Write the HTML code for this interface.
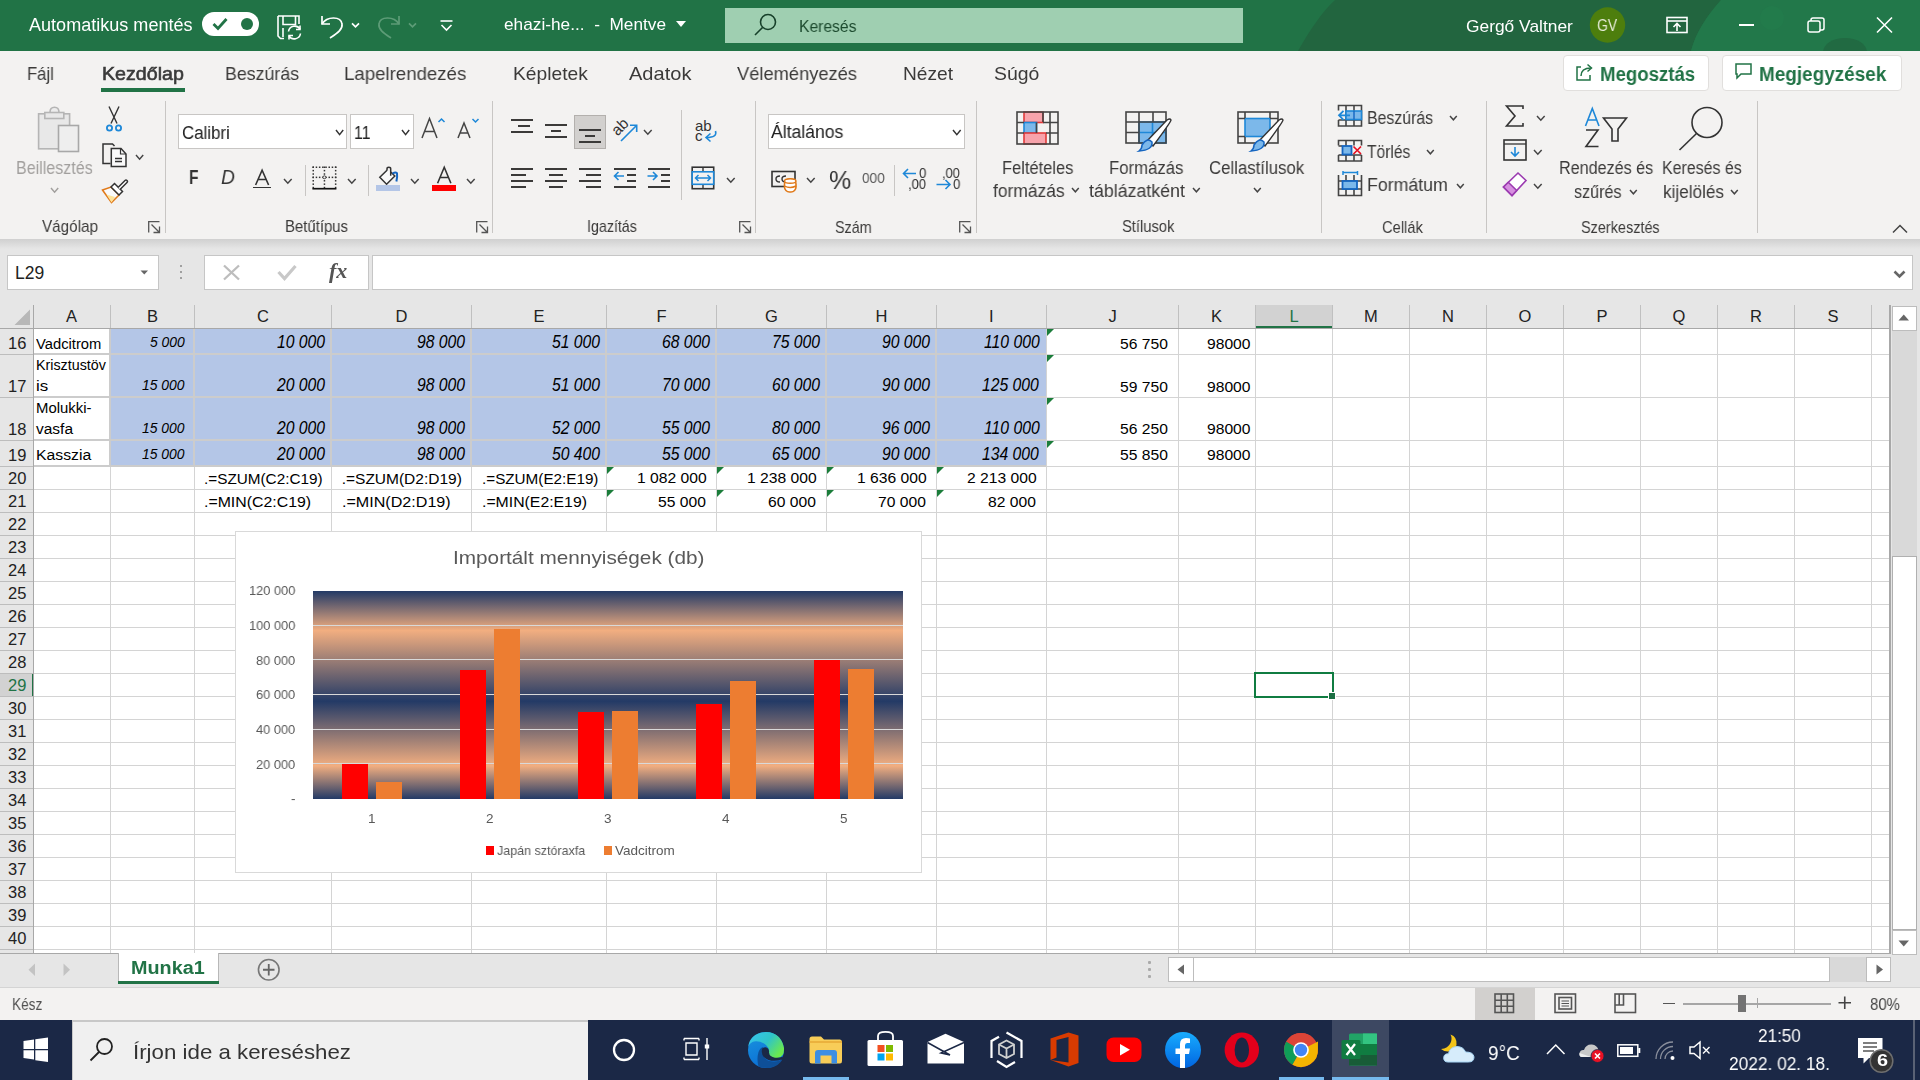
<!DOCTYPE html><html><head><meta charset="utf-8"><style>
*{margin:0;padding:0;box-sizing:border-box}
html,body{width:1920px;height:1080px;overflow:hidden;background:#e6e6e6;font-family:"Liberation Sans",sans-serif}
.t{position:absolute;white-space:pre;line-height:1.117;transform-origin:0 0;will-change:transform}
.l{will-change:auto}
svg{position:absolute;overflow:visible}
</style></head><body>
<div style="position:absolute;left:0px;top:0px;width:1920px;height:51px;background:#217346"></div>
<svg style="left:0;top:0" width="1920" height="51"><path d="M1335 0 H1721 C1705 18 1695 35 1691 51 H1298 C1310 30 1322 12 1335 0 Z" fill="#22653f"/>
<path d="M1721 0 H1920 V51 H1691 C1695 35 1705 18 1721 0 Z" fill="#22784a"/>
<circle cx="1772" cy="18" r="12" fill="#237d4c" opacity="0.6"/><ellipse cx="1845" cy="52" rx="22" ry="14" fill="#216a42"/></svg>
<div class="t" style="left:29.00px;top:15.01px;font-size:18px;color:#fff;transform:scaleX(1.0031);">Automatikus mentés</div>
<div style="position:absolute;left:202px;top:11.8px;width:57px;height:24px;background:#fff;border-radius:12px"></div>
<svg style="left:202px;top:11.8px" width="57" height="25"><path d="M11.5 12 l4.5 4.5 l8.5 -9.5" stroke="#217346" stroke-width="2.8" fill="none"/><circle cx="45" cy="12" r="6" fill="#217346"/></svg>
<svg style="left:276px;top:15px" width="26" height="25"><g stroke="#fff" stroke-width="1.6" fill="none">
<path d="M2 1 H23 V9"/><path d="M2 1 V21 L4.5 23.5 H8"/><path d="M7 1 V9.5 H19.5 V1"/><path d="M7 13 V22"/>
<path d="M12.5 16.5 a6.3 6.3 0 0 1 11.5 -2.5"/><path d="M24.5 18.5 a6.3 6.3 0 0 1 -11.5 2.5"/><path d="M24 10.5 V14.5 H20"/><path d="M13 24.5 V20.5 H17"/></g></svg>
<svg style="left:319px;top:12.8px" width="45" height="26"><g stroke="#fff" stroke-width="1.7" fill="none">
<path d="M3 3 V11 H11"/><path d="M3 11 C8 3 22 3 23 11 C24 17 17 21 11 25"/>
<path d="M33 10.3 l3.5 3.5 l3.5 -3.5"/></g></svg>
<svg style="left:377px;top:12.8px" width="45" height="26"><g stroke="#5d9c77" stroke-width="1.7" fill="none">
<path d="M22 3 V11 H14"/><path d="M22 11 C17 3 3 3 2 11 C1 17 8 21 14 25"/>
<path d="M32 10.3 l3.5 3.5 l3.5 -3.5"/></g></svg>
<svg style="left:440px;top:20px" width="13" height="11"><g stroke="#fff" stroke-width="1.6" fill="none"><path d="M0.5 1 H12.5"/><path d="M1.5 5 l5 5 l5 -5"/></g></svg>
<div class="t" style="left:504.30px;top:15.42px;font-size:17px;color:#fff;transform:scaleX(1.0150);">ehazi-he...  -  Mentve</div>
<svg style="left:676px;top:21px" width="11" height="7"><path d="M0 0 H10 L5 6 Z" fill="#fff"/></svg>
<div style="position:absolute;left:725px;top:8px;width:518px;height:35px;background:#9fcfb1"></div>
<svg style="left:753px;top:13px" width="24" height="24"><g stroke="#17402a" stroke-width="1.6" fill="none"><circle cx="15" cy="9" r="7.5"/><path d="M9.5 14.5 L2 22"/></g></svg>
<div class="t" style="left:799.30px;top:18.02px;font-size:16px;color:#1c4a2e;transform:scaleX(0.9780);">Keresés</div>
<div class="t" style="left:1466.00px;top:16.91px;font-size:17px;color:#fff;transform:scaleX(1.0219);">Gergő Valtner</div>
<svg style="left:1589px;top:7px" width="37" height="37"><circle cx="18.5" cy="18" r="17.7" fill="#4d7e0d"/></svg>
<div class="t" style="left:1597.00px;top:16.52px;font-size:16px;color:#e6ecd8;transform:scaleX(0.8696);">GV</div>
<svg style="left:1666px;top:16px" width="23" height="18"><g stroke="#fff" stroke-width="1.6" fill="none"><rect x="1" y="1.5" width="20" height="15"/><path d="M1 5 H21"/><path d="M11 15 V8 M7.5 11 L11 7.5 L14.5 11"/></g></svg>
<div style="position:absolute;left:1739px;top:24px;width:15px;height:1.6px;background:#fff"></div>
<svg style="left:1807px;top:17px" width="18" height="16"><g stroke="#fff" stroke-width="1.5" fill="none"><rect x="1" y="4" width="12" height="11" rx="2"/><path d="M4 4 V3 Q4 1 6 1 H15 Q17 1 17 3 V11 Q17 13 15 13 H13"/></g></svg>
<svg style="left:1876px;top:17px" width="17" height="16"><g stroke="#fff" stroke-width="1.6" fill="none"><path d="M1 0.5 L16 15.5 M16 0.5 L1 15.5"/></g></svg>
<div style="position:absolute;left:0px;top:51px;width:1920px;height:188px;background:#f3f2f1"></div>
<div style="position:absolute;left:681px;top:110px;width:1px;height:90px;background:#c8c6c4"></div>
<div class="t" style="left:26.90px;top:63.40px;font-size:19px;color:#3b3a39;transform:scaleX(0.8742);">Fájl</div>
<div class="t" style="left:101.90px;top:63.40px;font-size:19px;color:#3a3a3a;transform:scaleX(1.0329);-webkit-text-stroke:0.6px #3a3a3a;">Kezdőlap</div>
<div class="t" style="left:225.00px;top:63.40px;font-size:19px;color:#3b3a39;transform:scaleX(0.9342);">Beszúrás</div>
<div class="t" style="left:344.20px;top:63.40px;font-size:19px;color:#3b3a39;transform:scaleX(0.9808);">Lapelrendezés</div>
<div class="t" style="left:512.60px;top:63.40px;font-size:19px;color:#3b3a39;transform:scaleX(1.0122);">Képletek</div>
<div class="t" style="left:629.20px;top:63.40px;font-size:19px;color:#3b3a39;transform:scaleX(1.0550);">Adatok</div>
<div class="t" style="left:737.40px;top:63.40px;font-size:19px;color:#3b3a39;transform:scaleX(0.9632);">Véleményezés</div>
<div class="t" style="left:903.00px;top:63.40px;font-size:19px;color:#3b3a39;transform:scaleX(1.0080);">Nézet</div>
<div class="t" style="left:994.00px;top:63.40px;font-size:19px;color:#3b3a39;transform:scaleX(1.0227);">Súgó</div>
<div style="position:absolute;left:101px;top:88px;width:84px;height:4px;background:#217346"></div>
<div style="position:absolute;left:1563px;top:55px;width:146px;height:36px;background:#fff;border:1px solid #e1dfdd;border-radius:4px"></div>
<div style="position:absolute;left:1722px;top:55px;width:180px;height:36px;background:#fff;border:1px solid #e1dfdd;border-radius:4px"></div>
<svg style="left:1575px;top:62px" width="18" height="20"><g stroke="#217346" stroke-width="1.5" fill="none"><path d="M6 5 H2 V18 H15 V13"/><path d="M6 14 C6 8 10 6 16 6"/><path d="M12.5 2.5 L16.5 6 L12.5 9.5"/></g></svg>
<div class="t" style="left:1600.00px;top:62.90px;font-size:20px;color:#217346;font-weight:bold;transform:scaleX(0.9314);">Megosztás</div>
<svg style="left:1735px;top:63px" width="17" height="18"><g stroke="#217346" stroke-width="1.5" fill="none"><path d="M1 1 H16 V11 H6 L2 15 V11 H1 Z"/></g></svg>
<div class="t" style="left:1759.00px;top:62.90px;font-size:20px;color:#217346;font-weight:bold;transform:scaleX(0.9459);">Megjegyzések</div>
<div style="position:absolute;left:165px;top:101px;width:1px;height:132px;background:#c8c6c4"></div>
<div style="position:absolute;left:492px;top:101px;width:1px;height:132px;background:#c8c6c4"></div>
<div style="position:absolute;left:755px;top:101px;width:1px;height:132px;background:#c8c6c4"></div>
<div style="position:absolute;left:976px;top:101px;width:1px;height:132px;background:#c8c6c4"></div>
<div style="position:absolute;left:1321px;top:101px;width:1px;height:132px;background:#c8c6c4"></div>
<div style="position:absolute;left:1486px;top:101px;width:1px;height:132px;background:#c8c6c4"></div>
<div style="position:absolute;left:1757px;top:101px;width:1px;height:132px;background:#c8c6c4"></div>
<div class="t" style="left:42.40px;top:217.12px;font-size:17px;color:#3b3a39;transform:scaleX(0.8968);">Vágólap</div>
<div class="t" style="left:284.80px;top:217.22px;font-size:17px;color:#3b3a39;transform:scaleX(0.8778);">Betűtípus</div>
<div class="t" style="left:586.75px;top:217.12px;font-size:17px;color:#3b3a39;transform:scaleX(0.8375);">Igazítás</div>
<div class="t" style="left:834.70px;top:217.52px;font-size:17px;color:#3b3a39;transform:scaleX(0.8442);">Szám</div>
<div class="t" style="left:1121.70px;top:217.12px;font-size:17px;color:#3b3a39;transform:scaleX(0.8672);">Stílusok</div>
<div class="t" style="left:1382.10px;top:217.62px;font-size:17px;color:#3b3a39;transform:scaleX(0.8646);">Cellák</div>
<div class="t" style="left:1581.30px;top:217.62px;font-size:17px;color:#3b3a39;transform:scaleX(0.8495);">Szerkesztés</div>
<svg style="left:148px;top:221px" width="13" height="13"><g stroke="#555" stroke-width="1.3" fill="none"><path d="M0.7 11.5 V0.7 H11.5"/><path d="M3.5 3.5 L11.5 11.5 M11.5 5.5 V11.5 H5.5"/></g></svg>
<svg style="left:476px;top:221px" width="13" height="13"><g stroke="#555" stroke-width="1.3" fill="none"><path d="M0.7 11.5 V0.7 H11.5"/><path d="M3.5 3.5 L11.5 11.5 M11.5 5.5 V11.5 H5.5"/></g></svg>
<svg style="left:738.5px;top:221px" width="13" height="13"><g stroke="#555" stroke-width="1.3" fill="none"><path d="M0.7 11.5 V0.7 H11.5"/><path d="M3.5 3.5 L11.5 11.5 M11.5 5.5 V11.5 H5.5"/></g></svg>
<svg style="left:959px;top:221px" width="13" height="13"><g stroke="#555" stroke-width="1.3" fill="none"><path d="M0.7 11.5 V0.7 H11.5"/><path d="M3.5 3.5 L11.5 11.5 M11.5 5.5 V11.5 H5.5"/></g></svg>
<svg style="left:37px;top:106px" width="44" height="48"><g fill="none" stroke="#b5b5b5" stroke-width="1.6">
<rect x="1.6" y="7.8" width="31" height="35" fill="#e8e8e8"/><path d="M13 6.5 Q13 1.3 17.5 1.3 Q22 1.3 22 6.5" fill="#ececec"/><rect x="7.8" y="6.5" width="19" height="6" fill="#e8e8e8"/>
<rect x="21.5" y="19.5" width="20" height="26" fill="#eeeeee" stroke="#a8a8a8"/></g></svg>
<div class="t" style="left:16.00px;top:159.16px;font-size:17.5px;color:#a19f9d;transform:scaleX(0.9167);">Beillesztés</div>
<svg style="left:50.0px;top:187.39999999999998px" width="9.2" height="6.25"><path d="M1 1 L4.6 5.25 L8.2 1" stroke="#a19f9d" stroke-width="1.45" fill="none"/></svg>
<svg style="left:105px;top:106px" width="18" height="26"><g fill="none" stroke-width="1.4"><path d="M4 0.5 L12 17.5 M14 0.5 L6 17.5" stroke="#333"/><circle cx="4.5" cy="22" r="2.6" stroke="#1e88d8" stroke-width="1.8"/><circle cx="13.5" cy="22" r="2.6" stroke="#1e88d8" stroke-width="1.8"/></g></svg>
<svg style="left:101.5px;top:142.5px" width="26" height="26"><g fill="none" stroke="#333" stroke-width="1.5"><path d="M8.5 20.5 H1 V1 H10.5 L12.5 3"/><path d="M9.3 5.5 H19 L24 11 V23.5 H9.3 Z" fill="#fafafa"/><path d="M18.5 5.5 V11 H24" stroke-width="1.2"/><path d="M13 15.5 H20 M13 18.5 H20"/></g></svg>
<svg style="left:135.3px;top:153.7px" width="9.2" height="6.25"><path d="M1 1 L4.6 5.25 L8.2 1" stroke="#444" stroke-width="1.45" fill="none"/></svg>
<svg style="left:101px;top:178px" width="28" height="26"><g fill="none" stroke-width="1.5">
<path d="M1.5 12 L10 9 L18 17 L10.5 24.5 Z" fill="#fafafa" stroke="#e07a1a"/><path d="M5.5 16.5 L14 19 L10.5 24.5 Z" fill="#fde49a" stroke="none"/>
<path d="M10 9 L13.5 5.5 L21.5 13.5 L18 17 Z" fill="#fff" stroke="#333"/>
<path d="M17 9.5 L24 2.5 Q25 1.5 26 2.5 Q27 3.5 26 4.5 L19 11.5" fill="#fff" stroke="#333"/></g></svg>
<div style="position:absolute;left:178.4px;top:114.3px;width:169px;height:34.5px;background:#fff;border:1px solid #c8c6c4"></div>
<div class="t" style="left:181.70px;top:122.91px;font-size:18px;color:#222;transform:scaleX(0.9373);">Calibri</div>
<svg style="left:334.8px;top:128.7px" width="9.2" height="6.675"><path d="M1 1 L4.6 5.675 L8.2 1" stroke="#333" stroke-width="1.45" fill="none"/></svg>
<div style="position:absolute;left:350.3px;top:114.3px;width:63.5px;height:34.5px;background:#fff;border:1px solid #c8c6c4"></div>
<div class="t" style="left:354.00px;top:122.91px;font-size:18px;color:#222;transform:scaleX(0.8789);">11</div>
<svg style="left:400.8px;top:128.7px" width="9.2" height="6.675"><path d="M1 1 L4.6 5.675 L8.2 1" stroke="#333" stroke-width="1.45" fill="none"/></svg>
<svg style="left:421px;top:117px" width="25" height="22"><g fill="none" stroke-width="1.5"><path d="M1 21 L8.5 1.5 L16 21 M3.5 14.5 H13.5" stroke="#444"/><path d="M17.5 5 L20.5 2 L23.5 5" stroke="#1e88d8"/></g></svg>
<svg style="left:457px;top:117px" width="23" height="22"><g fill="none" stroke-width="1.5"><path d="M1 21 L7 6 L13 21 M3 16 H11" stroke="#444"/><path d="M15.5 2 L18.5 5 L21.5 2" stroke="#1e88d8"/></g></svg>
<div class="t" style="left:189.00px;top:166.25px;font-size:20.5px;color:#333;font-weight:bold;transform:scaleX(0.7615);">F</div>
<div class="t" style="left:221.00px;top:166.25px;font-size:20.5px;color:#333;font-style:italic;transform:scaleX(0.9400);">D</div>
<svg style="left:252px;top:168px" width="21" height="18"><path d="M3.6 17 L10.1 2.2 L16.6 17 M5.9 11.5 H14.3" stroke="#333" stroke-width="1.6" fill="none"/></svg>
<div style="position:absolute;left:253px;top:187px;width:18px;height:1.3px;background:#333"></div>
<svg style="left:283.3px;top:177.7px" width="9.65" height="6.25"><path d="M1 1 L4.825 5.25 L8.65 1" stroke="#444" stroke-width="1.45" fill="none"/></svg>
<div style="position:absolute;left:304.6px;top:164.5px;width:1px;height:31px;background:#c8c6c4"></div>
<svg style="left:312px;top:166px" width="26" height="25"><g fill="#333"><rect x="0.50" y="0.50" width="1.5" height="1.5"/><rect x="3.70" y="0.50" width="1.5" height="1.5"/><rect x="6.90" y="0.50" width="1.5" height="1.5"/><rect x="10.10" y="0.50" width="1.5" height="1.5"/><rect x="13.30" y="0.50" width="1.5" height="1.5"/><rect x="16.50" y="0.50" width="1.5" height="1.5"/><rect x="19.70" y="0.50" width="1.5" height="1.5"/><rect x="22.90" y="0.50" width="1.5" height="1.5"/><rect x="0.50" y="10.60" width="1.5" height="1.5"/><rect x="3.70" y="10.60" width="1.5" height="1.5"/><rect x="6.90" y="10.60" width="1.5" height="1.5"/><rect x="10.10" y="10.60" width="1.5" height="1.5"/><rect x="13.30" y="10.60" width="1.5" height="1.5"/><rect x="16.50" y="10.60" width="1.5" height="1.5"/><rect x="19.70" y="10.60" width="1.5" height="1.5"/><rect x="22.90" y="10.60" width="1.5" height="1.5"/><rect x="0.50" y="0.50" width="1.5" height="1.5"/><rect x="0.50" y="3.88" width="1.5" height="1.5"/><rect x="0.50" y="7.27" width="1.5" height="1.5"/><rect x="0.50" y="10.65" width="1.5" height="1.5"/><rect x="0.50" y="14.03" width="1.5" height="1.5"/><rect x="0.50" y="17.42" width="1.5" height="1.5"/><rect x="0.50" y="20.80" width="1.5" height="1.5"/><rect x="22.90" y="0.50" width="1.5" height="1.5"/><rect x="22.90" y="3.88" width="1.5" height="1.5"/><rect x="22.90" y="7.27" width="1.5" height="1.5"/><rect x="22.90" y="10.65" width="1.5" height="1.5"/><rect x="22.90" y="14.03" width="1.5" height="1.5"/><rect x="22.90" y="17.42" width="1.5" height="1.5"/><rect x="22.90" y="20.80" width="1.5" height="1.5"/><rect x="11.70" y="0.50" width="1.5" height="1.5"/><rect x="11.70" y="3.88" width="1.5" height="1.5"/><rect x="11.70" y="7.27" width="1.5" height="1.5"/><rect x="11.70" y="10.65" width="1.5" height="1.5"/><rect x="11.70" y="14.03" width="1.5" height="1.5"/><rect x="11.70" y="17.42" width="1.5" height="1.5"/><rect x="11.70" y="20.80" width="1.5" height="1.5"/></g><circle cx="12.4" cy="11.3" r="1.5" fill="#f3f2f1" stroke="#333" stroke-width="0.9"/><path d="M0.4 22.7 H24.4" stroke="#111" stroke-width="1.7"/></svg>
<svg style="left:346.8px;top:177.7px" width="9.65" height="6.25"><path d="M1 1 L4.825 5.25 L8.65 1" stroke="#444" stroke-width="1.45" fill="none"/></svg>
<div style="position:absolute;left:367.8px;top:164.5px;width:1px;height:31px;background:#c8c6c4"></div>
<svg style="left:378px;top:166px" width="24" height="20"><g fill="none" stroke-width="1.5"><path d="M9 4.2 L1.8 11.3 L8.6 18.2 L16.8 10 L12.7 6" fill="#fafafa" stroke="#333"/><path d="M9 4.5 V2.8 Q9 1.2 10.85 1.2 Q12.7 1.2 12.7 2.8 V9.8" stroke="#333"/><path d="M14.5 7.7 Q17.5 5.8 19 7.2 Q19.5 10 18.4 15.5" stroke="#1565c0" stroke-width="2"/></g></svg>
<div style="position:absolute;left:376px;top:185px;width:24px;height:6px;background:#b4c6e7"></div>
<svg style="left:409.8px;top:177.7px" width="9.65" height="6.25"><path d="M1 1 L4.825 5.25 L8.65 1" stroke="#444" stroke-width="1.45" fill="none"/></svg>
<svg style="left:436px;top:166px" width="17" height="18"><path d="M1.6 17.2 L8.25 1.3 L14.9 17.2 M4 11.5 H12.5" stroke="#333" stroke-width="1.6" fill="none"/></svg>
<div style="position:absolute;left:432px;top:185px;width:24px;height:6px;background:#ff0000"></div>
<svg style="left:465.8px;top:177.7px" width="9.65" height="6.25"><path d="M1 1 L4.825 5.25 L8.65 1" stroke="#444" stroke-width="1.45" fill="none"/></svg>
<div style="position:absolute;left:511px;top:119px;width:22px;height:2px;background:#3b3a39"></div>
<div style="position:absolute;left:517.5px;top:125px;width:12.0px;height:2px;background:#3b3a39"></div>
<div style="position:absolute;left:511px;top:131px;width:22px;height:2px;background:#3b3a39"></div>
<div style="position:absolute;left:545px;top:123.5px;width:21.600000000000023px;height:2px;background:#3b3a39"></div>
<div style="position:absolute;left:551px;top:129.5px;width:10px;height:2px;background:#3b3a39"></div>
<div style="position:absolute;left:545px;top:135.5px;width:21.600000000000023px;height:2px;background:#3b3a39"></div>
<div style="position:absolute;left:574px;top:115px;width:32px;height:34px;background:#d2d0ce;border:1px solid #b3b0ad"></div>
<div style="position:absolute;left:579.3px;top:129.3px;width:21.5px;height:2px;background:#3b3a39"></div>
<div style="position:absolute;left:585px;top:135.4px;width:10px;height:2px;background:#3b3a39"></div>
<div style="position:absolute;left:579.3px;top:141.3px;width:21.5px;height:2px;background:#3b3a39"></div>
<svg style="left:611px;top:117px" width="28" height="27"><g fill="none"><text x="0" y="0" font-family="Liberation Sans" font-size="15.5" fill="#333" transform="translate(6.5,19.5) rotate(-45)">ab</text><path d="M10 24 L25.5 8.5 M19 8.3 H25.7 V15" stroke="#1e88d8" stroke-width="1.6"/></g></svg>
<svg style="left:642.8px;top:128.7px" width="9.65" height="6.25"><path d="M1 1 L4.825 5.25 L8.65 1" stroke="#444" stroke-width="1.45" fill="none"/></svg>
<svg style="left:694px;top:117px" width="26" height="27"><text x="1" y="13.6" font-family="Liberation Sans" font-size="15" fill="#333">ab</text><text x="1" y="24.3" font-family="Liberation Sans" font-size="15" fill="#333">c</text><path d="M21.5 14 Q23.5 20.5 12.5 20.5 M16.5 16.5 L12 20.5 L16.5 24.5" stroke="#1e88d8" stroke-width="1.6" fill="none"/></svg>
<div style="position:absolute;left:511px;top:168.3px;width:22px;height:2px;background:#3b3a39"></div>
<div style="position:absolute;left:511px;top:174.3px;width:15.299999999999955px;height:2px;background:#3b3a39"></div>
<div style="position:absolute;left:511px;top:180.3px;width:22px;height:2px;background:#3b3a39"></div>
<div style="position:absolute;left:511px;top:186.3px;width:15.299999999999955px;height:2px;background:#3b3a39"></div>
<div style="position:absolute;left:545px;top:168.3px;width:21.600000000000023px;height:2px;background:#3b3a39"></div>
<div style="position:absolute;left:548.8px;top:174.3px;width:14.600000000000023px;height:2px;background:#3b3a39"></div>
<div style="position:absolute;left:545px;top:180.3px;width:21.600000000000023px;height:2px;background:#3b3a39"></div>
<div style="position:absolute;left:548.8px;top:186.3px;width:14.600000000000023px;height:2px;background:#3b3a39"></div>
<div style="position:absolute;left:579.3px;top:168.3px;width:21.5px;height:2px;background:#3b3a39"></div>
<div style="position:absolute;left:585.6px;top:174.3px;width:15.199999999999932px;height:2px;background:#3b3a39"></div>
<div style="position:absolute;left:579.3px;top:180.3px;width:21.5px;height:2px;background:#3b3a39"></div>
<div style="position:absolute;left:585.6px;top:186.3px;width:15.199999999999932px;height:2px;background:#3b3a39"></div>
<div style="position:absolute;left:614.2px;top:168.3px;width:21.59999999999991px;height:2px;background:#3b3a39"></div>
<div style="position:absolute;left:614.2px;top:186.3px;width:21.59999999999991px;height:2px;background:#3b3a39"></div>
<div style="position:absolute;left:627px;top:174.3px;width:8.799999999999955px;height:2px;background:#3b3a39"></div>
<div style="position:absolute;left:627px;top:180.3px;width:8.799999999999955px;height:2px;background:#3b3a39"></div>
<svg style="left:613px;top:170px" width="14" height="12"><path d="M1.5 6 H11 M5.5 2 L1.5 6 L5.5 10" stroke="#1e88d8" stroke-width="1.6" fill="none"/></svg>
<div style="position:absolute;left:648.2px;top:168.3px;width:21.799999999999955px;height:2px;background:#3b3a39"></div>
<div style="position:absolute;left:648.2px;top:186.3px;width:21.799999999999955px;height:2px;background:#3b3a39"></div>
<div style="position:absolute;left:661px;top:174.3px;width:9px;height:2px;background:#3b3a39"></div>
<div style="position:absolute;left:661px;top:180.3px;width:9px;height:2px;background:#3b3a39"></div>
<svg style="left:647px;top:170px" width="14" height="12"><path d="M0.5 6 H10 M6 2 L10 6 L6 10" stroke="#1e88d8" stroke-width="1.6" fill="none"/></svg>
<svg style="left:691px;top:166px" width="25" height="25"><g fill="none"><rect x="1.2" y="1.2" width="21.5" height="21.5" stroke="#333" stroke-width="1.6"/><path d="M12 1 V23" stroke="#333" stroke-width="1.4"/><rect x="1.2" y="5.8" width="21.5" height="12.5" fill="#f3f2f1" stroke="#1e88d8" stroke-width="1.6"/><path d="M4.5 12 H19.5 M7.5 9 L4.5 12 L7.5 15 M16.5 9 L19.5 12 L16.5 15" stroke="#1e88d8" stroke-width="1.5"/></g></svg>
<svg style="left:725.8px;top:177.2px" width="9.65" height="6.25"><path d="M1 1 L4.825 5.25 L8.65 1" stroke="#444" stroke-width="1.45" fill="none"/></svg>
<div style="position:absolute;left:768px;top:114.3px;width:197px;height:34.5px;background:#fff;border:1px solid #c8c6c4"></div>
<div class="t" style="left:771.20px;top:122.31px;font-size:18px;color:#222;transform:scaleX(0.9770);">Általános</div>
<svg style="left:951.8px;top:129.2px" width="9.65" height="6.675"><path d="M1 1 L4.825 5.675 L8.65 1" stroke="#333" stroke-width="1.45" fill="none"/></svg>
<svg style="left:771px;top:170px" width="27" height="23"><g fill="none"><rect x="1" y="1.5" width="23" height="15" stroke="#333" stroke-width="1.6"/><path d="M9 6 Q5 6 5 9 Q5 12 9 12 M15 6 Q11 6 11 9 Q11 12 15 12" stroke="#333" stroke-width="1.4"/><rect x="13.5" y="9" width="11.5" height="13" rx="5" fill="#fff" stroke="#e07a1a" stroke-width="1.6"/><ellipse cx="19.25" cy="11" rx="5.7" ry="2.3" fill="#fff" stroke="#e07a1a" stroke-width="1.5"/><path d="M13.5 16 Q19 19 25 16" stroke="#e07a1a" stroke-width="1.4"/></g></svg>
<svg style="left:805.8px;top:177.2px" width="9.65" height="6.25"><path d="M1 1 L4.825 5.25 L8.65 1" stroke="#444" stroke-width="1.45" fill="none"/></svg>
<div class="t" style="left:828.90px;top:165.87px;font-size:26px;color:#333;transform:scaleX(0.9609);">%</div>
<div class="t" style="left:862.30px;top:170.03px;font-size:15px;color:#555;transform:scaleX(0.9080);">000</div>
<div style="position:absolute;left:894px;top:164.5px;width:1px;height:31.5px;background:#c8c6c4"></div>
<svg style="left:902px;top:167px" width="25" height="23"><path d="M1.5 6.5 H14 M6 2 L1.5 6.5 L6 11" stroke="#1e88d8" stroke-width="1.6" fill="none"/></svg>
<div class="t" style="left:918.60px;top:164.88px;font-size:14.5px;color:#333;transform:scaleX(0.9125);">0</div>
<div class="t" style="left:908.00px;top:176.28px;font-size:14.5px;color:#333;transform:scaleX(0.9000);">,00</div>
<div class="t" style="left:942.30px;top:164.88px;font-size:14.5px;color:#333;transform:scaleX(0.8850);">,00</div>
<div class="t" style="left:952.70px;top:176.28px;font-size:14.5px;color:#333;transform:scaleX(0.9125);">0</div>
<svg style="left:936px;top:178px" width="25" height="13"><path d="M0.5 6.5 H14 M9.5 2 L14 6.5 L9.5 11" stroke="#1e88d8" stroke-width="1.6" fill="none"/></svg>
<svg style="left:1016px;top:111px" width="43" height="34"><g stroke-width="1.6">
<rect x="8" y="1" width="19" height="10.5" fill="#f7a3ab" stroke="#e03a3a"/><rect x="8" y="11.5" width="12.5" height="10.5" fill="#7cb8ea" stroke="#1e88d8"/><rect x="8" y="22" width="22" height="11" fill="#f7a3ab" stroke="#e03a3a"/>
<rect x="1" y="1" width="41" height="32" fill="none" stroke="#444"/><path d="M1 11.5 H8 M27 11.5 H42 M1 22 H8 M30 22 H42 M34 1 V33 M27 1 V11 M20.5 11.5 V22" stroke="#444" fill="none"/>
</g></svg>
<div class="t" style="left:1002.00px;top:157.51px;font-size:18px;color:#3b3a39;transform:scaleX(0.9154);">Feltételes</div>
<div class="t" style="left:992.70px;top:181.21px;font-size:18px;color:#3b3a39;transform:scaleX(0.9676);">formázás</div>
<svg style="left:1071.3px;top:187.2px" width="8.75" height="5.824999999999999"><path d="M1 1 L4.375 4.824999999999999 L7.75 1" stroke="#444" stroke-width="1.45" fill="none"/></svg>
<svg style="left:1125px;top:111px" width="48" height="42"><g stroke-width="1.6">
<rect x="14" y="11" width="27" height="21" fill="#7cb8ea" stroke="#1e88d8"/><path d="M27.5 11 V32 M14 21.5 H41" stroke="#1e88d8"/>
<rect x="1" y="1" width="40" height="31" fill="none" stroke="#444"/><path d="M1 11 H41 M1 21.5 H14 M14 1 V32 M28 1 V11" stroke="#444" fill="none"/>
<path d="M22 30 L42 9 Q45 7 46 9 Q46 11 28 35 Z" fill="#fff" stroke="#333" stroke-width="1.4"/>
<path d="M17 34 Q22 26 27 31 Q28 39 14 40 Q17 38 17 34 Z" fill="#7cb8ea" stroke="#1565c0" stroke-width="1.5"/>
</g></svg>
<div class="t" style="left:1109.00px;top:157.51px;font-size:18px;color:#3b3a39;transform:scaleX(0.9300);">Formázás</div>
<div class="t" style="left:1089.30px;top:181.21px;font-size:18px;color:#3b3a39;transform:scaleX(0.9887);">táblázatként</div>
<svg style="left:1191.8px;top:187.2px" width="8.75" height="5.824999999999999"><path d="M1 1 L4.375 4.824999999999999 L7.75 1" stroke="#444" stroke-width="1.45" fill="none"/></svg>
<svg style="left:1237px;top:111px" width="48" height="42"><g stroke-width="1.6">
<rect x="8" y="7.5" width="25" height="18" fill="#7cb8ea" stroke="#1e88d8"/>
<rect x="1" y="1" width="40" height="31" fill="none" stroke="#444"/><path d="M1 7.5 H8 M33 7.5 H41 M1 25.5 H8 M8 1 V7 M8 26 V32 M33 1 V7" stroke="#444" fill="none"/>
<path d="M22 30 L42 9 Q45 7 46 9 Q46 11 28 35 Z" fill="#fff" stroke="#333" stroke-width="1.4"/>
<path d="M17 34 Q22 26 27 31 Q28 39 14 40 Q17 38 17 34 Z" fill="#7cb8ea" stroke="#1565c0" stroke-width="1.5"/>
</g></svg>
<div class="t" style="left:1209.20px;top:157.51px;font-size:18px;color:#3b3a39;transform:scaleX(0.9330);">Cellastílusok</div>
<svg style="left:1252.8px;top:187.2px" width="8.75" height="5.824999999999999"><path d="M1 1 L4.375 4.824999999999999 L7.75 1" stroke="#444" stroke-width="1.45" fill="none"/></svg>
<svg style="left:1337px;top:104px" width="27" height="24"><g fill="none" stroke="#444" stroke-width="1.6">
<path d="M1.5 6.5 V1.5 H24.5 V22 H1.5 V16"/><path d="M9 1.5 V22 M17 1.5 V22 M1.5 16 H24.5"/></g>
<rect x="9" y="7" width="15.5" height="8.5" fill="#7cb8ea" stroke="#1e88d8" stroke-width="1.6"/><path d="M17 7 V15.5" stroke="#1565c0" stroke-width="1.4"/>
<path d="M2 11.3 H13 M6.5 6.8 L2 11.3 L6.5 15.8" stroke="#1e88d8" stroke-width="1.8" fill="none"/></svg>
<svg style="left:1337px;top:138.5px" width="27" height="24"><g fill="none" stroke="#444" stroke-width="1.6">
<path d="M1.5 6.5 V1.5 H24.5 V6.5 M1.5 16 V22 H24.5 V16"/><path d="M9 1.5 V22 M17 1.5 V6.5 M17 16 V22 M1.5 7 H5 M1.5 16 H24.5"/></g>
<rect x="5.5" y="7" width="9" height="8.5" fill="#7cb8ea" stroke="#1565c0" stroke-width="1.8"/>
<path d="M16.5 7.5 L24 15 M24 7.5 L16.5 15" stroke="#e81123" stroke-width="1.7"/></svg>
<svg style="left:1337px;top:171px" width="27" height="26"><g fill="none" stroke="#444" stroke-width="1.6">
<path d="M1.5 4 V24.5 H24.5 V4"/><path d="M9 4 V24.5 M17 4 V24.5 M1.5 10 H24.5 M1.5 18 H24.5"/></g>
<rect x="5.5" y="10" width="14.5" height="8" fill="#7cb8ea" stroke="#1565c0" stroke-width="1.8"/>
<path d="M6 1.5 H20.5 M6 0 V4 M20.5 0 V4" stroke="#1e88d8" stroke-width="1.5" fill="none"/></svg>
<div class="t" style="left:1366.90px;top:107.51px;font-size:18px;color:#3b3a39;transform:scaleX(0.8813);">Beszúrás</div>
<svg style="left:1449.3px;top:114.7px" width="8.75" height="5.824999999999999"><path d="M1 1 L4.375 4.824999999999999 L7.75 1" stroke="#444" stroke-width="1.45" fill="none"/></svg>
<div class="t" style="left:1366.90px;top:141.51px;font-size:18px;color:#3b3a39;transform:scaleX(0.8660);">Törlés</div>
<svg style="left:1426.3px;top:149.2px" width="8.75" height="5.824999999999999"><path d="M1 1 L4.375 4.824999999999999 L7.75 1" stroke="#444" stroke-width="1.45" fill="none"/></svg>
<div class="t" style="left:1366.90px;top:175.31px;font-size:18px;color:#3b3a39;transform:scaleX(0.9854);">Formátum</div>
<svg style="left:1455.8px;top:182.7px" width="8.75" height="5.824999999999999"><path d="M1 1 L4.375 4.824999999999999 L7.75 1" stroke="#444" stroke-width="1.45" fill="none"/></svg>
<svg style="left:1505px;top:105px" width="20" height="22"><path d="M18 4 V1 H1.5 L10 11 L1.5 21 H18 V18" stroke="#333" stroke-width="1.6" fill="none"/></svg>
<svg style="left:1536.3px;top:115.2px" width="9.65" height="6.25"><path d="M1 1 L4.825 5.25 L8.65 1" stroke="#444" stroke-width="1.45" fill="none"/></svg>
<svg style="left:1503px;top:139px" width="24" height="22"><g fill="none"><rect x="1" y="1" width="22" height="20" stroke="#333" stroke-width="1.6"/><path d="M1 5 H23" stroke="#333" stroke-width="1.3"/><path d="M12 8 V17 M8 13 L12 17 L16 13" stroke="#1e88d8" stroke-width="1.6"/></g></svg>
<svg style="left:1532.8px;top:149.2px" width="9.65" height="6.25"><path d="M1 1 L4.825 5.25 L8.65 1" stroke="#444" stroke-width="1.45" fill="none"/></svg>
<svg style="left:1502px;top:172px" width="26" height="26"><g stroke-width="1.6" stroke="#9b3ab0" stroke-linejoin="miter"><path d="M16 1 L24 8.5 L10 23.5 L1.5 15 Z" fill="#fff"/><path d="M1.5 15 L6.3 10.3 L14.7 18.5 L10 23.5 Z" fill="#d68fe0"/></g></svg>
<svg style="left:1532.8px;top:182.7px" width="9.65" height="6.25"><path d="M1 1 L4.825 5.25 L8.65 1" stroke="#444" stroke-width="1.45" fill="none"/></svg>
<svg style="left:1584px;top:107px" width="46" height="42"><g fill="none" stroke-width="1.6"><path d="M1.5 19 L8.3 1.5 L15 19 M3.8 13 H12.8" stroke="#1e88d8"/><path d="M2 23 H14 L2 39.5 H14.5" stroke="#333"/><path d="M19.5 11 H42.5 L34 22 V34 H28 V22 Z" stroke="#333"/></g></svg>
<div class="t" style="left:1558.60px;top:157.71px;font-size:18px;color:#3b3a39;transform:scaleX(0.8971);">Rendezés és</div>
<div class="t" style="left:1573.60px;top:181.71px;font-size:18px;color:#3b3a39;transform:scaleX(0.8962);">szűrés</div>
<svg style="left:1628.8px;top:188.7px" width="8.75" height="5.824999999999999"><path d="M1 1 L4.375 4.824999999999999 L7.75 1" stroke="#444" stroke-width="1.45" fill="none"/></svg>
<svg style="left:1678px;top:106px" width="40" height="46"><g fill="none" stroke="#333" stroke-width="1.6"><circle cx="29" cy="16.5" r="15"/><path d="M18.5 27.5 L1.5 44"/></g></svg>
<div class="t" style="left:1661.70px;top:157.71px;font-size:18px;color:#3b3a39;transform:scaleX(0.8856);">Keresés és</div>
<div class="t" style="left:1662.60px;top:181.71px;font-size:18px;color:#3b3a39;transform:scaleX(0.9531);">kijelölés</div>
<svg style="left:1730.3px;top:188.7px" width="8.75" height="5.824999999999999"><path d="M1 1 L4.375 4.824999999999999 L7.75 1" stroke="#444" stroke-width="1.45" fill="none"/></svg>
<svg style="left:1892px;top:224px" width="16" height="10"><path d="M1 8.5 L8 1.5 L15 8.5" stroke="#444" stroke-width="1.5" fill="none"/></svg>
<div style="position:absolute;left:0;top:239px;width:1920px;height:10px;background:linear-gradient(#d0d0d0,#e6e6e6)"></div>
<div style="position:absolute;left:7px;top:255px;width:152px;height:35px;background:#fff;border:1px solid #c6c6c6"></div>
<div class="t l" style="left:15.00px;top:263.11px;font-size:18px;color:#222;transform:scaleX(0.9733);">L29</div>
<svg style="left:140px;top:270px" width="9" height="5"><path d="M0.5 0.5 H8 L4.25 4.5 Z" fill="#666"/></svg>
<div style="position:absolute;left:179.5px;top:265px;width:2.2px;height:2.2px;background:#888;border-radius:1px"></div>
<div style="position:absolute;left:179.5px;top:271px;width:2.2px;height:2.2px;background:#888;border-radius:1px"></div>
<div style="position:absolute;left:179.5px;top:277px;width:2.2px;height:2.2px;background:#888;border-radius:1px"></div>
<div style="position:absolute;left:204px;top:255px;width:165px;height:35px;background:#fff;border:1px solid #c6c6c6"></div>
<svg style="left:222px;top:264px" width="19" height="17"><path d="M2 1.5 L17 15.5 M17 1.5 L2 15.5" stroke="#bdbdbd" stroke-width="2.3" fill="none"/></svg>
<svg style="left:277px;top:264px" width="20" height="17"><path d="M1.5 8 L7.5 14.5 L18.5 2" stroke="#c8c8c8" stroke-width="3.2" fill="none"/></svg>
<div class="t" style="left:329px;top:259px;font-family:'Liberation Serif',serif;font-style:italic;font-weight:bold;font-size:22px;color:#555;letter-spacing:0px">fx</div>
<div style="position:absolute;left:372px;top:255px;width:1541px;height:35px;background:#fff;border:1px solid #c6c6c6"></div>
<svg style="left:1893px;top:270px" width="13" height="9"><path d="M1.5 1.5 L6.5 6.5 L11.5 1.5" stroke="#666" stroke-width="2.6" fill="none"/></svg>
<div style="position:absolute;left:0px;top:305px;width:1890px;height:23px;background:#e6e6e6"></div>
<div style="position:absolute;left:0px;top:328px;width:33px;height:625px;background:#e6e6e6"></div>
<div style="position:absolute;left:34px;top:329px;width:1855px;height:624px;background:#fff"></div>
<div style="position:absolute;left:1256px;top:305px;width:76px;height:23px;background:#d2d2d2"></div>
<div style="position:absolute;left:1256px;top:326px;width:76px;height:2px;background:#217346"></div>
<div style="position:absolute;left:0px;top:674px;width:32px;height:22px;background:#d2d2d2"></div>
<div style="position:absolute;left:32px;top:673px;width:2px;height:24px;background:#217346"></div>
<svg style="left:14px;top:309px" width="17" height="17"><path d="M16 0.5 V16 H0.5 Z" fill="#b8b8b8"/></svg>
<div style="position:absolute;left:33px;top:305px;width:1px;height:23px;background:#c0c0c0"></div>
<div style="position:absolute;left:110px;top:305px;width:1px;height:23px;background:#c0c0c0"></div>
<div style="position:absolute;left:194px;top:305px;width:1px;height:23px;background:#c0c0c0"></div>
<div style="position:absolute;left:331px;top:305px;width:1px;height:23px;background:#c0c0c0"></div>
<div style="position:absolute;left:471px;top:305px;width:1px;height:23px;background:#c0c0c0"></div>
<div style="position:absolute;left:606px;top:305px;width:1px;height:23px;background:#c0c0c0"></div>
<div style="position:absolute;left:716px;top:305px;width:1px;height:23px;background:#c0c0c0"></div>
<div style="position:absolute;left:826px;top:305px;width:1px;height:23px;background:#c0c0c0"></div>
<div style="position:absolute;left:936px;top:305px;width:1px;height:23px;background:#c0c0c0"></div>
<div style="position:absolute;left:1046px;top:305px;width:1px;height:23px;background:#c0c0c0"></div>
<div style="position:absolute;left:1178px;top:305px;width:1px;height:23px;background:#c0c0c0"></div>
<div style="position:absolute;left:1255px;top:305px;width:1px;height:23px;background:#c0c0c0"></div>
<div style="position:absolute;left:1332px;top:305px;width:1px;height:23px;background:#c0c0c0"></div>
<div style="position:absolute;left:1409px;top:305px;width:1px;height:23px;background:#c0c0c0"></div>
<div style="position:absolute;left:1486px;top:305px;width:1px;height:23px;background:#c0c0c0"></div>
<div style="position:absolute;left:1563px;top:305px;width:1px;height:23px;background:#c0c0c0"></div>
<div style="position:absolute;left:1640px;top:305px;width:1px;height:23px;background:#c0c0c0"></div>
<div style="position:absolute;left:1717px;top:305px;width:1px;height:23px;background:#c0c0c0"></div>
<div style="position:absolute;left:1794px;top:305px;width:1px;height:23px;background:#c0c0c0"></div>
<div style="position:absolute;left:1871px;top:305px;width:1px;height:23px;background:#c0c0c0"></div>
<div style="position:absolute;left:0px;top:328px;width:1890px;height:1px;background:#a8a8a8"></div>
<div style="position:absolute;left:33px;top:305px;width:1px;height:648px;background:#a8a8a8"></div>
<div style="position:absolute;left:0px;top:354px;width:33px;height:1px;background:#bdbdbd"></div>
<div style="position:absolute;left:0px;top:397px;width:33px;height:1px;background:#bdbdbd"></div>
<div style="position:absolute;left:0px;top:440px;width:33px;height:1px;background:#bdbdbd"></div>
<div style="position:absolute;left:0px;top:466px;width:33px;height:1px;background:#bdbdbd"></div>
<div style="position:absolute;left:0px;top:489px;width:33px;height:1px;background:#bdbdbd"></div>
<div style="position:absolute;left:0px;top:512px;width:33px;height:1px;background:#bdbdbd"></div>
<div style="position:absolute;left:0px;top:535px;width:33px;height:1px;background:#bdbdbd"></div>
<div style="position:absolute;left:0px;top:558px;width:33px;height:1px;background:#bdbdbd"></div>
<div style="position:absolute;left:0px;top:581px;width:33px;height:1px;background:#bdbdbd"></div>
<div style="position:absolute;left:0px;top:604px;width:33px;height:1px;background:#bdbdbd"></div>
<div style="position:absolute;left:0px;top:627px;width:33px;height:1px;background:#bdbdbd"></div>
<div style="position:absolute;left:0px;top:650px;width:33px;height:1px;background:#bdbdbd"></div>
<div style="position:absolute;left:0px;top:673px;width:33px;height:1px;background:#bdbdbd"></div>
<div style="position:absolute;left:0px;top:696px;width:33px;height:1px;background:#bdbdbd"></div>
<div style="position:absolute;left:0px;top:719px;width:33px;height:1px;background:#bdbdbd"></div>
<div style="position:absolute;left:0px;top:742px;width:33px;height:1px;background:#bdbdbd"></div>
<div style="position:absolute;left:0px;top:765px;width:33px;height:1px;background:#bdbdbd"></div>
<div style="position:absolute;left:0px;top:788px;width:33px;height:1px;background:#bdbdbd"></div>
<div style="position:absolute;left:0px;top:811px;width:33px;height:1px;background:#bdbdbd"></div>
<div style="position:absolute;left:0px;top:834px;width:33px;height:1px;background:#bdbdbd"></div>
<div style="position:absolute;left:0px;top:857px;width:33px;height:1px;background:#bdbdbd"></div>
<div style="position:absolute;left:0px;top:880px;width:33px;height:1px;background:#bdbdbd"></div>
<div style="position:absolute;left:0px;top:903px;width:33px;height:1px;background:#bdbdbd"></div>
<div style="position:absolute;left:0px;top:926px;width:33px;height:1px;background:#bdbdbd"></div>
<div style="position:absolute;left:0px;top:949px;width:33px;height:1px;background:#bdbdbd"></div>
<div style="position:absolute;left:110px;top:329px;width:1px;height:624px;background:#d4d4d4"></div>
<div style="position:absolute;left:194px;top:329px;width:1px;height:624px;background:#d4d4d4"></div>
<div style="position:absolute;left:331px;top:329px;width:1px;height:624px;background:#d4d4d4"></div>
<div style="position:absolute;left:471px;top:329px;width:1px;height:624px;background:#d4d4d4"></div>
<div style="position:absolute;left:606px;top:329px;width:1px;height:624px;background:#d4d4d4"></div>
<div style="position:absolute;left:716px;top:329px;width:1px;height:624px;background:#d4d4d4"></div>
<div style="position:absolute;left:826px;top:329px;width:1px;height:624px;background:#d4d4d4"></div>
<div style="position:absolute;left:936px;top:329px;width:1px;height:624px;background:#d4d4d4"></div>
<div style="position:absolute;left:1046px;top:329px;width:1px;height:624px;background:#d4d4d4"></div>
<div style="position:absolute;left:1178px;top:329px;width:1px;height:624px;background:#d4d4d4"></div>
<div style="position:absolute;left:1255px;top:329px;width:1px;height:624px;background:#d4d4d4"></div>
<div style="position:absolute;left:1332px;top:329px;width:1px;height:624px;background:#d4d4d4"></div>
<div style="position:absolute;left:1409px;top:329px;width:1px;height:624px;background:#d4d4d4"></div>
<div style="position:absolute;left:1486px;top:329px;width:1px;height:624px;background:#d4d4d4"></div>
<div style="position:absolute;left:1563px;top:329px;width:1px;height:624px;background:#d4d4d4"></div>
<div style="position:absolute;left:1640px;top:329px;width:1px;height:624px;background:#d4d4d4"></div>
<div style="position:absolute;left:1717px;top:329px;width:1px;height:624px;background:#d4d4d4"></div>
<div style="position:absolute;left:1794px;top:329px;width:1px;height:624px;background:#d4d4d4"></div>
<div style="position:absolute;left:1871px;top:329px;width:1px;height:624px;background:#d4d4d4"></div>
<div style="position:absolute;left:34px;top:354px;width:1855px;height:1px;background:#d4d4d4"></div>
<div style="position:absolute;left:34px;top:397px;width:1855px;height:1px;background:#d4d4d4"></div>
<div style="position:absolute;left:34px;top:440px;width:1855px;height:1px;background:#d4d4d4"></div>
<div style="position:absolute;left:34px;top:466px;width:1855px;height:1px;background:#d4d4d4"></div>
<div style="position:absolute;left:34px;top:489px;width:1855px;height:1px;background:#d4d4d4"></div>
<div style="position:absolute;left:34px;top:512px;width:1855px;height:1px;background:#d4d4d4"></div>
<div style="position:absolute;left:34px;top:535px;width:1855px;height:1px;background:#d4d4d4"></div>
<div style="position:absolute;left:34px;top:558px;width:1855px;height:1px;background:#d4d4d4"></div>
<div style="position:absolute;left:34px;top:581px;width:1855px;height:1px;background:#d4d4d4"></div>
<div style="position:absolute;left:34px;top:604px;width:1855px;height:1px;background:#d4d4d4"></div>
<div style="position:absolute;left:34px;top:627px;width:1855px;height:1px;background:#d4d4d4"></div>
<div style="position:absolute;left:34px;top:650px;width:1855px;height:1px;background:#d4d4d4"></div>
<div style="position:absolute;left:34px;top:673px;width:1855px;height:1px;background:#d4d4d4"></div>
<div style="position:absolute;left:34px;top:696px;width:1855px;height:1px;background:#d4d4d4"></div>
<div style="position:absolute;left:34px;top:719px;width:1855px;height:1px;background:#d4d4d4"></div>
<div style="position:absolute;left:34px;top:742px;width:1855px;height:1px;background:#d4d4d4"></div>
<div style="position:absolute;left:34px;top:765px;width:1855px;height:1px;background:#d4d4d4"></div>
<div style="position:absolute;left:34px;top:788px;width:1855px;height:1px;background:#d4d4d4"></div>
<div style="position:absolute;left:34px;top:811px;width:1855px;height:1px;background:#d4d4d4"></div>
<div style="position:absolute;left:34px;top:834px;width:1855px;height:1px;background:#d4d4d4"></div>
<div style="position:absolute;left:34px;top:857px;width:1855px;height:1px;background:#d4d4d4"></div>
<div style="position:absolute;left:34px;top:880px;width:1855px;height:1px;background:#d4d4d4"></div>
<div style="position:absolute;left:34px;top:903px;width:1855px;height:1px;background:#d4d4d4"></div>
<div style="position:absolute;left:34px;top:926px;width:1855px;height:1px;background:#d4d4d4"></div>
<div style="position:absolute;left:34px;top:949px;width:1855px;height:1px;background:#d4d4d4"></div>
<div style="position:absolute;left:1889px;top:305px;width:1.5px;height:649px;background:#a8a8a8"></div>
<div style="position:absolute;left:0px;top:953px;width:1890px;height:1px;background:#a8a8a8"></div>
<div style="position:absolute;left:111px;top:329px;width:935px;height:137px;background:#b4c6e7"></div>
<div style="position:absolute;left:109px;top:329px;width:2px;height:137px;background:#cccccc"></div>
<div style="position:absolute;left:193px;top:329px;width:2px;height:137px;background:#cccccc"></div>
<div style="position:absolute;left:330px;top:329px;width:2px;height:137px;background:#cccccc"></div>
<div style="position:absolute;left:470px;top:329px;width:2px;height:137px;background:#cccccc"></div>
<div style="position:absolute;left:605px;top:329px;width:2px;height:137px;background:#cccccc"></div>
<div style="position:absolute;left:715px;top:329px;width:2px;height:137px;background:#cccccc"></div>
<div style="position:absolute;left:825px;top:329px;width:2px;height:137px;background:#cccccc"></div>
<div style="position:absolute;left:935px;top:329px;width:2px;height:137px;background:#cccccc"></div>
<div style="position:absolute;left:34px;top:353px;width:1012px;height:2px;background:#cccccc"></div>
<div style="position:absolute;left:34px;top:396px;width:1012px;height:2px;background:#cccccc"></div>
<div style="position:absolute;left:34px;top:439px;width:1012px;height:2px;background:#cccccc"></div>
<div style="position:absolute;left:34px;top:465px;width:1012px;height:2px;background:#cccccc"></div>
<div class="t l" style="left:66.00px;top:307.07px;font-size:16.5px;color:#222;transform:scaleX(1.0000);">A</div>
<div class="t l" style="left:147.00px;top:307.07px;font-size:16.5px;color:#222;transform:scaleX(1.0000);">B</div>
<div class="t l" style="left:257.00px;top:307.07px;font-size:16.5px;color:#222;transform:scaleX(1.0000);">C</div>
<div class="t l" style="left:395.50px;top:307.07px;font-size:16.5px;color:#222;transform:scaleX(1.0000);">D</div>
<div class="t l" style="left:533.50px;top:307.07px;font-size:16.5px;color:#222;transform:scaleX(1.0000);">E</div>
<div class="t l" style="left:656.50px;top:307.07px;font-size:16.5px;color:#222;transform:scaleX(1.0000);">F</div>
<div class="t l" style="left:765.00px;top:307.07px;font-size:16.5px;color:#222;transform:scaleX(1.0000);">G</div>
<div class="t l" style="left:875.50px;top:307.07px;font-size:16.5px;color:#222;transform:scaleX(1.0000);">H</div>
<div class="t l" style="left:989.00px;top:307.07px;font-size:16.5px;color:#222;transform:scaleX(1.0000);">I</div>
<div class="t l" style="left:1108.50px;top:307.07px;font-size:16.5px;color:#222;transform:scaleX(1.0000);">J</div>
<div class="t l" style="left:1211.00px;top:307.07px;font-size:16.5px;color:#222;transform:scaleX(1.0000);">K</div>
<div class="t l" style="left:1289.50px;top:307.07px;font-size:16.5px;color:#217346;transform:scaleX(1.0000);">L</div>
<div class="t l" style="left:1364.00px;top:307.07px;font-size:16.5px;color:#222;transform:scaleX(1.0000);">M</div>
<div class="t l" style="left:1442.00px;top:307.07px;font-size:16.5px;color:#222;transform:scaleX(1.0000);">N</div>
<div class="t l" style="left:1518.50px;top:307.07px;font-size:16.5px;color:#222;transform:scaleX(1.0000);">O</div>
<div class="t l" style="left:1596.50px;top:307.07px;font-size:16.5px;color:#222;transform:scaleX(1.0000);">P</div>
<div class="t l" style="left:1672.50px;top:307.07px;font-size:16.5px;color:#222;transform:scaleX(1.0000);">Q</div>
<div class="t l" style="left:1750.00px;top:307.07px;font-size:16.5px;color:#222;transform:scaleX(1.0000);">R</div>
<div class="t l" style="left:1827.50px;top:307.07px;font-size:16.5px;color:#222;transform:scaleX(1.0000);">S</div>
<div class="t l" style="left:8.00px;top:333.77px;font-size:16.5px;color:#222;transform:scaleX(1.0000);">16</div>
<div class="t l" style="left:8.00px;top:376.77px;font-size:16.5px;color:#222;transform:scaleX(1.0000);">17</div>
<div class="t l" style="left:8.00px;top:419.77px;font-size:16.5px;color:#222;transform:scaleX(1.0000);">18</div>
<div class="t l" style="left:8.00px;top:445.77px;font-size:16.5px;color:#222;transform:scaleX(1.0000);">19</div>
<div class="t l" style="left:8.00px;top:468.77px;font-size:16.5px;color:#222;transform:scaleX(1.0000);">20</div>
<div class="t l" style="left:8.00px;top:491.77px;font-size:16.5px;color:#222;transform:scaleX(1.0000);">21</div>
<div class="t l" style="left:8.00px;top:514.77px;font-size:16.5px;color:#222;transform:scaleX(1.0000);">22</div>
<div class="t l" style="left:8.00px;top:537.77px;font-size:16.5px;color:#222;transform:scaleX(1.0000);">23</div>
<div class="t l" style="left:8.00px;top:560.77px;font-size:16.5px;color:#222;transform:scaleX(1.0000);">24</div>
<div class="t l" style="left:8.00px;top:583.77px;font-size:16.5px;color:#222;transform:scaleX(1.0000);">25</div>
<div class="t l" style="left:8.00px;top:606.77px;font-size:16.5px;color:#222;transform:scaleX(1.0000);">26</div>
<div class="t l" style="left:8.00px;top:629.77px;font-size:16.5px;color:#222;transform:scaleX(1.0000);">27</div>
<div class="t l" style="left:8.00px;top:652.77px;font-size:16.5px;color:#222;transform:scaleX(1.0000);">28</div>
<div class="t l" style="left:8.00px;top:675.77px;font-size:16.5px;color:#217346;transform:scaleX(1.0000);">29</div>
<div class="t l" style="left:8.00px;top:698.77px;font-size:16.5px;color:#222;transform:scaleX(1.0000);">30</div>
<div class="t l" style="left:8.00px;top:721.77px;font-size:16.5px;color:#222;transform:scaleX(1.0000);">31</div>
<div class="t l" style="left:8.00px;top:744.77px;font-size:16.5px;color:#222;transform:scaleX(1.0000);">32</div>
<div class="t l" style="left:8.00px;top:767.77px;font-size:16.5px;color:#222;transform:scaleX(1.0000);">33</div>
<div class="t l" style="left:8.00px;top:790.77px;font-size:16.5px;color:#222;transform:scaleX(1.0000);">34</div>
<div class="t l" style="left:8.00px;top:813.77px;font-size:16.5px;color:#222;transform:scaleX(1.0000);">35</div>
<div class="t l" style="left:8.00px;top:836.77px;font-size:16.5px;color:#222;transform:scaleX(1.0000);">36</div>
<div class="t l" style="left:8.00px;top:859.77px;font-size:16.5px;color:#222;transform:scaleX(1.0000);">37</div>
<div class="t l" style="left:8.00px;top:882.77px;font-size:16.5px;color:#222;transform:scaleX(1.0000);">38</div>
<div class="t l" style="left:8.00px;top:905.77px;font-size:16.5px;color:#222;transform:scaleX(1.0000);">39</div>
<div class="t l" style="left:8.00px;top:928.77px;font-size:16.5px;color:#222;transform:scaleX(1.0000);">40</div>
<div class="t l" style="left:36.00px;top:334.97px;font-size:15.5px;color:#000;transform:scaleX(0.9522);">Vadcitrom</div>
<div class="t l" style="left:36.00px;top:355.97px;font-size:15.5px;color:#000;transform:scaleX(0.9211);">Krisztustöv</div>
<div class="t l" style="left:36.00px;top:376.97px;font-size:15.5px;color:#000;transform:scaleX(1.0909);">is</div>
<div class="t l" style="left:36.00px;top:399.27px;font-size:15.5px;color:#000;transform:scaleX(0.9603);">Molukki-</div>
<div class="t l" style="left:36.00px;top:419.97px;font-size:15.5px;color:#000;transform:scaleX(1.0000);">vasfa</div>
<div class="t l" style="left:36.00px;top:445.97px;font-size:15.5px;color:#000;transform:scaleX(1.0182);">Kasszia</div>
<div class="t l" style="left:149.72px;top:335.35px;font-size:14.2px;color:#000;font-style:italic;transform:scaleX(0.9800);">5 000</div>
<div class="t l" style="left:276.55px;top:331.86px;font-size:18.5px;color:#000;font-style:italic;transform:scaleX(0.8500);">10 000</div>
<div class="t l" style="left:416.55px;top:331.86px;font-size:18.5px;color:#000;font-style:italic;transform:scaleX(0.8500);">98 000</div>
<div class="t l" style="left:551.55px;top:331.86px;font-size:18.5px;color:#000;font-style:italic;transform:scaleX(0.8500);">51 000</div>
<div class="t l" style="left:661.55px;top:331.86px;font-size:18.5px;color:#000;font-style:italic;transform:scaleX(0.8500);">68 000</div>
<div class="t l" style="left:771.55px;top:331.86px;font-size:18.5px;color:#000;font-style:italic;transform:scaleX(0.8500);">75 000</div>
<div class="t l" style="left:881.55px;top:331.86px;font-size:18.5px;color:#000;font-style:italic;transform:scaleX(0.8500);">90 000</div>
<div class="t l" style="left:983.90px;top:331.86px;font-size:18.5px;color:#000;font-style:italic;transform:scaleX(0.8500);">110 000</div>
<div class="t l" style="left:141.88px;top:378.35px;font-size:14.2px;color:#000;font-style:italic;transform:scaleX(0.9800);">15 000</div>
<div class="t l" style="left:276.55px;top:374.86px;font-size:18.5px;color:#000;font-style:italic;transform:scaleX(0.8500);">20 000</div>
<div class="t l" style="left:416.55px;top:374.86px;font-size:18.5px;color:#000;font-style:italic;transform:scaleX(0.8500);">98 000</div>
<div class="t l" style="left:551.55px;top:374.86px;font-size:18.5px;color:#000;font-style:italic;transform:scaleX(0.8500);">51 000</div>
<div class="t l" style="left:661.55px;top:374.86px;font-size:18.5px;color:#000;font-style:italic;transform:scaleX(0.8500);">70 000</div>
<div class="t l" style="left:771.55px;top:374.86px;font-size:18.5px;color:#000;font-style:italic;transform:scaleX(0.8500);">60 000</div>
<div class="t l" style="left:881.55px;top:374.86px;font-size:18.5px;color:#000;font-style:italic;transform:scaleX(0.8500);">90 000</div>
<div class="t l" style="left:982.20px;top:374.86px;font-size:18.5px;color:#000;font-style:italic;transform:scaleX(0.8500);">125 000</div>
<div class="t l" style="left:141.88px;top:421.15px;font-size:14.2px;color:#000;font-style:italic;transform:scaleX(0.9800);">15 000</div>
<div class="t l" style="left:276.55px;top:417.66px;font-size:18.5px;color:#000;font-style:italic;transform:scaleX(0.8500);">20 000</div>
<div class="t l" style="left:416.55px;top:417.66px;font-size:18.5px;color:#000;font-style:italic;transform:scaleX(0.8500);">98 000</div>
<div class="t l" style="left:551.55px;top:417.66px;font-size:18.5px;color:#000;font-style:italic;transform:scaleX(0.8500);">52 000</div>
<div class="t l" style="left:661.55px;top:417.66px;font-size:18.5px;color:#000;font-style:italic;transform:scaleX(0.8500);">55 000</div>
<div class="t l" style="left:771.55px;top:417.66px;font-size:18.5px;color:#000;font-style:italic;transform:scaleX(0.8500);">80 000</div>
<div class="t l" style="left:881.55px;top:417.66px;font-size:18.5px;color:#000;font-style:italic;transform:scaleX(0.8500);">96 000</div>
<div class="t l" style="left:983.90px;top:417.66px;font-size:18.5px;color:#000;font-style:italic;transform:scaleX(0.8500);">110 000</div>
<div class="t l" style="left:141.88px;top:447.15px;font-size:14.2px;color:#000;font-style:italic;transform:scaleX(0.9800);">15 000</div>
<div class="t l" style="left:276.55px;top:443.66px;font-size:18.5px;color:#000;font-style:italic;transform:scaleX(0.8500);">20 000</div>
<div class="t l" style="left:416.55px;top:443.66px;font-size:18.5px;color:#000;font-style:italic;transform:scaleX(0.8500);">98 000</div>
<div class="t l" style="left:551.55px;top:443.66px;font-size:18.5px;color:#000;font-style:italic;transform:scaleX(0.8500);">50 400</div>
<div class="t l" style="left:661.55px;top:443.66px;font-size:18.5px;color:#000;font-style:italic;transform:scaleX(0.8500);">55 000</div>
<div class="t l" style="left:771.55px;top:443.66px;font-size:18.5px;color:#000;font-style:italic;transform:scaleX(0.8500);">65 000</div>
<div class="t l" style="left:881.55px;top:443.66px;font-size:18.5px;color:#000;font-style:italic;transform:scaleX(0.8500);">90 000</div>
<div class="t l" style="left:982.20px;top:443.66px;font-size:18.5px;color:#000;font-style:italic;transform:scaleX(0.8500);">134 000</div>
<div class="t l" style="left:1120.22px;top:334.57px;font-size:15.5px;color:#000;transform:scaleX(1.0100);">56 750</div>
<div class="t l" style="left:1207.36px;top:334.57px;font-size:15.5px;color:#000;transform:scaleX(1.0100);">98000</div>
<div class="t l" style="left:1120.22px;top:377.57px;font-size:15.5px;color:#000;transform:scaleX(1.0100);">59 750</div>
<div class="t l" style="left:1207.36px;top:377.57px;font-size:15.5px;color:#000;transform:scaleX(1.0100);">98000</div>
<div class="t l" style="left:1120.22px;top:420.37px;font-size:15.5px;color:#000;transform:scaleX(1.0100);">56 250</div>
<div class="t l" style="left:1207.36px;top:420.37px;font-size:15.5px;color:#000;transform:scaleX(1.0100);">98000</div>
<div class="t l" style="left:1120.22px;top:446.37px;font-size:15.5px;color:#000;transform:scaleX(1.0100);">55 850</div>
<div class="t l" style="left:1207.36px;top:446.37px;font-size:15.5px;color:#000;transform:scaleX(1.0100);">98000</div>
<div class="t l" style="left:204.30px;top:470.27px;font-size:15.5px;color:#000;transform:scaleX(0.9867);">.=SZUM(C2:C19)</div>
<div class="t l" style="left:341.70px;top:470.27px;font-size:15.5px;color:#000;transform:scaleX(1.0000);">.=SZUM(D2:D19)</div>
<div class="t l" style="left:481.70px;top:470.27px;font-size:15.5px;color:#000;transform:scaleX(0.9831);">.=SZUM(E2:E19)</div>
<div class="t l" style="left:204.30px;top:492.87px;font-size:15.5px;color:#000;transform:scaleX(1.0229);">.=MIN(C2:C19)</div>
<div class="t l" style="left:341.70px;top:492.87px;font-size:15.5px;color:#000;transform:scaleX(1.0381);">.=MIN(D2:D19)</div>
<div class="t l" style="left:481.70px;top:492.87px;font-size:15.5px;color:#000;transform:scaleX(1.0194);">.=MIN(E2:E19)</div>
<div class="t l" style="left:636.81px;top:469.47px;font-size:15.5px;color:#000;transform:scaleX(1.0100);">1 082 000</div>
<div class="t l" style="left:658.02px;top:492.87px;font-size:15.5px;color:#000;transform:scaleX(1.0100);">55 000</div>
<div class="t l" style="left:746.81px;top:469.47px;font-size:15.5px;color:#000;transform:scaleX(1.0100);">1 238 000</div>
<div class="t l" style="left:768.02px;top:492.87px;font-size:15.5px;color:#000;transform:scaleX(1.0100);">60 000</div>
<div class="t l" style="left:856.81px;top:469.47px;font-size:15.5px;color:#000;transform:scaleX(1.0100);">1 636 000</div>
<div class="t l" style="left:878.02px;top:492.87px;font-size:15.5px;color:#000;transform:scaleX(1.0100);">70 000</div>
<div class="t l" style="left:966.81px;top:469.47px;font-size:15.5px;color:#000;transform:scaleX(1.0100);">2 213 000</div>
<div class="t l" style="left:988.02px;top:492.87px;font-size:15.5px;color:#000;transform:scaleX(1.0100);">82 000</div>
<svg style="left:1047px;top:329px" width="8" height="8"><path d="M0 0 H7 L0 7 Z" fill="#1b7d3a"/></svg>
<svg style="left:1047px;top:355px" width="8" height="8"><path d="M0 0 H7 L0 7 Z" fill="#1b7d3a"/></svg>
<svg style="left:1047px;top:398px" width="8" height="8"><path d="M0 0 H7 L0 7 Z" fill="#1b7d3a"/></svg>
<svg style="left:1047px;top:441px" width="8" height="8"><path d="M0 0 H7 L0 7 Z" fill="#1b7d3a"/></svg>
<svg style="left:607px;top:467px" width="8" height="8"><path d="M0 0 H7 L0 7 Z" fill="#1b7d3a"/></svg>
<svg style="left:717px;top:467px" width="8" height="8"><path d="M0 0 H7 L0 7 Z" fill="#1b7d3a"/></svg>
<svg style="left:827px;top:467px" width="8" height="8"><path d="M0 0 H7 L0 7 Z" fill="#1b7d3a"/></svg>
<svg style="left:937px;top:467px" width="8" height="8"><path d="M0 0 H7 L0 7 Z" fill="#1b7d3a"/></svg>
<svg style="left:607px;top:490px" width="8" height="8"><path d="M0 0 H7 L0 7 Z" fill="#1b7d3a"/></svg>
<svg style="left:717px;top:490px" width="8" height="8"><path d="M0 0 H7 L0 7 Z" fill="#1b7d3a"/></svg>
<svg style="left:827px;top:490px" width="8" height="8"><path d="M0 0 H7 L0 7 Z" fill="#1b7d3a"/></svg>
<svg style="left:937px;top:490px" width="8" height="8"><path d="M0 0 H7 L0 7 Z" fill="#1b7d3a"/></svg>
<div style="position:absolute;left:1254px;top:672px;width:80px;height:26px;border:2px solid #107c41"></div>
<div style="position:absolute;left:1329px;top:693px;width:6px;height:6px;background:#1d7044;border:1px solid #fff;box-sizing:content-box;margin:-1px"></div>
<div style="position:absolute;left:235px;top:531px;width:686.5px;height:342px;background:#fff;border:1px solid #d9d9d9"></div>
<div class="t" style="left:452.50px;top:547.00px;font-size:19px;color:#595959;transform:scaleX(1.0922);">Importált mennyiségek (db)</div>
<div style="position:absolute;left:313px;top:591px;width:590px;height:208px;background:linear-gradient(180deg,#233a66 0%,#f2ae80 19%,#233a66 53%,#f2ae80 84%,#233a66 100%)"></div>
<div class="t" style="left:248.95px;top:583.48px;font-size:13.5px;color:#595959;transform:scaleX(0.9500);">120 000</div>
<div style="position:absolute;left:313px;top:625px;width:590px;height:1px;background:#d9d9d9"></div>
<div class="t" style="left:248.95px;top:618.15px;font-size:13.5px;color:#595959;transform:scaleX(0.9500);">100 000</div>
<div style="position:absolute;left:313px;top:659px;width:590px;height:1px;background:#d9d9d9"></div>
<div class="t" style="left:255.60px;top:652.82px;font-size:13.5px;color:#595959;transform:scaleX(0.9500);">80 000</div>
<div style="position:absolute;left:313px;top:694px;width:590px;height:1px;background:#d9d9d9"></div>
<div class="t" style="left:255.60px;top:687.48px;font-size:13.5px;color:#595959;transform:scaleX(0.9500);">60 000</div>
<div style="position:absolute;left:313px;top:729px;width:590px;height:1px;background:#d9d9d9"></div>
<div class="t" style="left:255.60px;top:722.15px;font-size:13.5px;color:#595959;transform:scaleX(0.9500);">40 000</div>
<div style="position:absolute;left:313px;top:763px;width:590px;height:1px;background:#d9d9d9"></div>
<div class="t" style="left:255.60px;top:756.82px;font-size:13.5px;color:#595959;transform:scaleX(0.9500);">20 000</div>
<div class="t" style="left:290.75px;top:791.48px;font-size:13.5px;color:#595959;transform:scaleX(0.9500);">-</div>
<div style="position:absolute;left:341.5px;top:764.3333333333334px;width:26.5px;height:34.666666666666664px;background:#ff0000"></div>
<div style="position:absolute;left:375.5px;top:781.6666666666666px;width:26.5px;height:17.333333333333332px;background:#ed7d31"></div>
<div class="t" style="left:367.50px;top:811.28px;font-size:13.5px;color:#595959;transform:scaleX(1.0000);">1</div>
<div style="position:absolute;left:459.5px;top:669.8666666666667px;width:26.5px;height:129.13333333333333px;background:#ff0000"></div>
<div style="position:absolute;left:493.5px;top:629.1333333333333px;width:26.5px;height:169.86666666666667px;background:#ed7d31"></div>
<div class="t" style="left:485.50px;top:811.28px;font-size:13.5px;color:#595959;transform:scaleX(1.0000);">2</div>
<div style="position:absolute;left:577.5px;top:712.3333333333334px;width:26.5px;height:86.66666666666667px;background:#ff0000"></div>
<div style="position:absolute;left:611.5px;top:710.6px;width:26.5px;height:88.39999999999999px;background:#ed7d31"></div>
<div class="t" style="left:603.50px;top:811.28px;font-size:13.5px;color:#595959;transform:scaleX(1.0000);">3</div>
<div style="position:absolute;left:695.5px;top:703.6666666666666px;width:26.5px;height:95.33333333333333px;background:#ff0000"></div>
<div style="position:absolute;left:729.5px;top:681.1333333333333px;width:26.5px;height:117.86666666666666px;background:#ed7d31"></div>
<div class="t" style="left:721.50px;top:811.28px;font-size:13.5px;color:#595959;transform:scaleX(1.0000);">4</div>
<div style="position:absolute;left:813.5px;top:660.3333333333334px;width:26.5px;height:138.66666666666666px;background:#ff0000"></div>
<div style="position:absolute;left:847.5px;top:669.0px;width:26.5px;height:130.0px;background:#ed7d31"></div>
<div class="t" style="left:839.50px;top:811.28px;font-size:13.5px;color:#595959;transform:scaleX(1.0000);">5</div>
<div style="position:absolute;left:486px;top:846px;width:8px;height:8.5px;background:#ff0000"></div>
<div class="t" style="left:496.70px;top:842.78px;font-size:13.5px;color:#595959;transform:scaleX(0.9260);">Japán sztóraxfa</div>
<div style="position:absolute;left:604.3px;top:846px;width:8px;height:8.5px;background:#ed7d31"></div>
<div class="t" style="left:614.80px;top:842.78px;font-size:13.5px;color:#595959;transform:scaleX(0.9933);">Vadcitrom</div>
<div style="position:absolute;left:0px;top:954.5px;width:1920px;height:32.5px;background:#e6e6e6"></div>
<svg style="left:28px;top:963px" width="8" height="14"><path d="M7 0.5 V13 L0.5 6.75 Z" fill="#c3c3c3"/></svg>
<svg style="left:63px;top:963px" width="8" height="14"><path d="M0.5 0.5 V13 L7 6.75 Z" fill="#c3c3c3"/></svg>
<div style="position:absolute;left:118px;top:953px;width:101px;height:30px;background:#fff;border-left:1px solid #b8b8b8;border-right:1px solid #b8b8b8"></div>
<div style="position:absolute;left:118px;top:981px;width:101px;height:2.5px;background:#217346"></div>
<div class="t" style="left:131.25px;top:958.86px;font-size:17.5px;color:#217346;font-weight:bold;transform:scaleX(1.1300);">Munka1</div>
<svg style="left:257px;top:958px" width="24" height="24"><circle cx="11.75" cy="11.75" r="10.3" stroke="#777" stroke-width="1.6" fill="none"/><path d="M11.75 6 V17.5 M6 11.75 H17.5" stroke="#666" stroke-width="1.8"/></svg>
<div style="position:absolute;left:1148px;top:961px;width:2.5px;height:2.5px;background:#aaa;border-radius:1px"></div>
<div style="position:absolute;left:1148px;top:968px;width:2.5px;height:2.5px;background:#aaa;border-radius:1px"></div>
<div style="position:absolute;left:1148px;top:975px;width:2.5px;height:2.5px;background:#aaa;border-radius:1px"></div>
<div style="position:absolute;left:1168px;top:957px;width:26px;height:25px;background:#fff;border:1px solid #bdbdbd"></div>
<svg style="left:1177px;top:964px" width="8" height="11"><path d="M7 0.5 V10.5 L0.5 5.5 Z" fill="#666"/></svg>
<div style="position:absolute;left:1193px;top:957px;width:637px;height:25px;background:#fff;border:1px solid #bdbdbd"></div>
<div style="position:absolute;left:1830px;top:957px;width:36px;height:25px;background:#d9d9d9"></div>
<div style="position:absolute;left:1866px;top:957px;width:25px;height:25px;background:#fff;border:1px solid #bdbdbd"></div>
<svg style="left:1876px;top:964px" width="8" height="11"><path d="M0.5 0.5 V10.5 L7 5.5 Z" fill="#666"/></svg>
<div style="position:absolute;left:1892px;top:331px;width:25px;height:226px;background:#d9d9d9"></div>
<div style="position:absolute;left:1892px;top:306px;width:25px;height:25px;background:#fff;border:1px solid #bdbdbd"></div>
<svg style="left:1898px;top:314px" width="12" height="7"><path d="M0.5 6.5 H11 L5.75 0.5 Z" fill="#666"/></svg>
<div style="position:absolute;left:1892px;top:556px;width:25px;height:374px;background:#fff;border:1px solid #b0b0b0"></div>
<div style="position:absolute;left:1892px;top:930px;width:25px;height:25px;background:#fff;border:1px solid #bdbdbd"></div>
<svg style="left:1898px;top:940px" width="12" height="7"><path d="M0.5 0.5 H11 L5.75 6.5 Z" fill="#666"/></svg>
<div style="position:absolute;left:0px;top:987px;width:1920px;height:33px;background:#f3f2f1;border-top:1px solid #d4d4d4"></div>
<div class="t" style="left:11.50px;top:995.07px;font-size:16.5px;color:#505050;transform:scaleX(0.8243);">Kész</div>
<div style="position:absolute;left:1475px;top:988px;width:60px;height:32px;background:#d2d0ce"></div>
<svg style="left:1494px;top:993px" width="21" height="21"><g fill="none" stroke="#555" stroke-width="1.6"><rect x="1" y="1" width="18.5" height="18.5"/><path d="M7.2 1 V19.5 M13.3 1 V19.5 M1 7.2 H19.5 M1 13.3 H19.5"/></g></svg>
<svg style="left:1554px;top:993px" width="23" height="21"><g fill="none" stroke="#555" stroke-width="1.6"><rect x="1" y="1" width="20.5" height="18.5"/><rect x="5" y="4.5" width="12.5" height="11.5"/><path d="M7.5 8 H15 M7.5 10.5 H15 M7.5 13 H15" stroke-width="1.2"/></g></svg>
<svg style="left:1614px;top:993px" width="23" height="21"><g fill="none" stroke="#555" stroke-width="1.6"><rect x="1" y="1" width="20.5" height="18.5"/><path d="M1 12 H9.5 V1 M5.2 1 V12"/></g></svg>
<div style="position:absolute;left:1663px;top:1002.5px;width:12px;height:1.6px;background:#555"></div>
<div style="position:absolute;left:1683px;top:1003px;width:148px;height:1.6px;background:#a6a6a6"></div>
<div style="position:absolute;left:1756.5px;top:998px;width:1.5px;height:10px;background:#a6a6a6"></div>
<div style="position:absolute;left:1738px;top:995px;width:8px;height:17px;background:#737373"></div>
<svg style="left:1838px;top:996px" width="14" height="14"><path d="M6.75 0.5 V13 M0.5 6.75 H13" stroke="#444" stroke-width="1.6"/></svg>
<div class="t" style="left:1869.60px;top:994.67px;font-size:16.5px;color:#444;transform:scaleX(0.9091);">80%</div>
<div style="position:absolute;left:0px;top:1020px;width:1920px;height:60px;background:#1b2846"></div>
<div style="position:absolute;left:72px;top:1020px;width:516px;height:60px;background:#f0f0f0;border-top:2px solid #c8c8c8;border-left:1px solid #c8c8c8"></div>
<svg style="left:23px;top:1037px" width="26" height="26"><g fill="#fff"><path d="M0.5 4 L11 2.5 V12 H0.5 Z"/><path d="M12.3 2.3 L25 0.5 V12 H12.3 Z"/><path d="M0.5 13.3 H11 V22.5 L0.5 21 Z"/><path d="M12.3 13.3 H25 V25 L12.3 23.3 Z"/></g></svg>
<svg style="left:89px;top:1037px" width="26" height="26"><g fill="none" stroke="#222" stroke-width="1.8"><circle cx="15.5" cy="9.5" r="7.5"/><path d="M10 15 L1.5 23.5"/></g></svg>
<div class="t" style="left:132.50px;top:1040.49px;font-size:21px;color:#333;transform:scaleX(1.0610);">Írjon ide a kereséshez</div>
<svg style="left:612px;top:1038px" width="24" height="24"><circle cx="12" cy="12" r="10" stroke="#fff" stroke-width="2.3" fill="none"/></svg>
<svg style="left:683px;top:1037px" width="27" height="25"><g fill="none" stroke="#fff" stroke-width="1.4"><path d="M1 1.5 H16 M1 22.5 H16 M3 6 H14 V18 H3 Z M1 3.5 V1.5 M16 3.5 V1.5 M1 20.5 V22.5 M16 20.5 V22.5"/><path d="M24 1 V23"/></g><rect x="21.8" y="7.5" width="4.4" height="4" fill="#fff"/></svg>
<svg style="left:748px;top:1032px" width="37" height="37"><defs><linearGradient id="eg1" x1="0" y1="0" x2="1" y2="0.6"><stop offset="0" stop-color="#38c3f3"/><stop offset="0.55" stop-color="#2fc4c8"/><stop offset="1" stop-color="#6be84e"/></linearGradient><linearGradient id="eg2" x1="0" y1="0" x2="0.4" y2="1"><stop offset="0" stop-color="#1a95de"/><stop offset="1" stop-color="#0b6fd6"/></linearGradient></defs>
<circle cx="18" cy="18" r="18" fill="url(#eg2)"/>
<path d="M0.3 14.5 Q2 1 18 0 Q33 0.5 36 16 Q36.5 25 30 26 Q24 27 20.5 22.5 Q22.5 17 18 13 Q13 9 7.5 9.3 Q2 10 0.3 14.5 Z" fill="url(#eg1)"/>
<path d="M10.5 34.5 Q8.5 27 10.5 20 Q12 16 15 15 Q13 25 20 28.5 Q27 31 34.5 27.5 Q31 34 22 36 Q15 36.5 10.5 34.5 Z" fill="#0e4f98"/>
<path d="M13.8 20 Q13.5 15 17.5 15.2 Q21.5 16 21 20.5 Q21.5 25 27 25.7 Q31 26 35 24.8 L34.3 27.3 Q27 30 20.5 28 Q14 25.5 13.8 20 Z" fill="#1b2846"/>
</svg>
<svg style="left:809px;top:1036px" width="34" height="28"><path d="M0.5 3 Q0.5 0.5 3 0.5 H12 L15 3.5 H31 Q33 3.5 33 6 V25 Q33 27.5 31 27.5 H3 Q0.5 27.5 0.5 25 Z" fill="#f8cd58"/><path d="M0.5 6 H33" stroke="#e7a835" stroke-width="1.5"/><path d="M6 27.5 V17 Q6 14 9 14 H25 Q28 14 28 17 V27.5 H22.5 V19.5 H11.5 V27.5 Z" fill="#3d8ee3"/></svg>
<div style="position:absolute;left:803px;top:1077px;width:46px;height:3px;background:#76b9ed"></div>
<svg style="left:867px;top:1031px" width="37" height="36"><path d="M11 9 V5 Q11 0.8 18.5 0.8 Q26 0.8 26 5 V9" stroke="#fff" stroke-width="1.8" fill="none"/><rect x="0.5" y="9" width="35.5" height="26" rx="1.5" fill="#fff"/><rect x="10.5" y="14" width="7" height="7" fill="#f25022"/><rect x="19" y="14" width="7" height="7" fill="#7fba00"/><rect x="10.5" y="22.5" width="7" height="7" fill="#00a4ef"/><rect x="19" y="22.5" width="7" height="7" fill="#ffb900"/></svg>
<svg style="left:927px;top:1033px" width="38" height="32"><path d="M0.5 9 L18.5 0.8 L37 9 V30.5 H0.5 Z" fill="#fff"/><path d="M0.5 9.5 L23 22 L14 20 L37 9.5" fill="none" stroke="#1b2846" stroke-width="1.5"/></svg>
<svg style="left:989px;top:1031px" width="35" height="38"><g fill="none" stroke="#fff" stroke-width="2.2"><path d="M17.5 1.5 L32.5 10 V27 M2.5 27 V10 L10 5.8"/><path d="M8 30 L17.5 36 L26 31"/></g><g fill="none" stroke="#d0d0d0" stroke-width="1.8"><path d="M17.5 9.5 L25 13.5 V23 L17.5 27 L10 23 V13.5 Z M10 13.5 L17.5 17.5 L25 13.5 M17.5 17.5 V27"/></g></svg>
<svg style="left:1050px;top:1032px" width="30" height="35"><path d="M0.5 6.5 L18.5 0.5 L28.5 3.5 V31 L18.5 34.5 L0.5 28 L18.5 30.5 V5 L6.5 8 V25.5 L0.5 28 Z" fill="#d83b01"/></svg>
<svg style="left:1106px;top:1037px" width="36" height="26"><rect x="0.5" y="0.5" width="35" height="24.5" rx="7" fill="#ff0000"/><path d="M14 7 V18.5 L24 12.75 Z" fill="#fff"/></svg>
<svg style="left:1164px;top:1031px" width="38" height="38"><defs><linearGradient id="fbg" x1="0" y1="0" x2="0" y2="1"><stop offset="0" stop-color="#18acfe"/><stop offset="1" stop-color="#0165e1"/></linearGradient></defs><circle cx="19" cy="19" r="18" fill="url(#fbg)"/><path d="M16 37 V23 H11.5 V17.5 H16 V13 Q16 7 22 7 Q24.5 7 26 7.5 V12 H23 Q21 12 21 14.5 V17.5 H26 L25 23 H21 V37 Z" fill="#fff"/></svg>
<svg style="left:1224px;top:1032px" width="36" height="36"><ellipse cx="17.8" cy="18" rx="17.2" ry="17.5" fill="#e3001b"/><ellipse cx="17.8" cy="18" rx="7.2" ry="12.5" fill="#1b2846"/><ellipse cx="19" cy="18" rx="5.5" ry="11.5" fill="#1b2846"/></svg>
<svg style="left:1283px;top:1032px" width="36" height="36"><circle cx="18" cy="18" r="17" fill="#db4437"/><path d="M18 18 L3.3 9.5 A17 17 0 0 0 9.5 32.7 Z" fill="#0f9d58"/><path d="M18 18 L9.5 32.7 A17 17 0 0 0 34.9 16.5 L35 9.5 Z" fill="#f4b400"/><path d="M18 18 L3.3 9.5 A17 17 0 0 1 32.7 9.5 Z" fill="#db4437"/><circle cx="18" cy="18" r="7.8" fill="#fff"/><circle cx="18" cy="18" r="6.2" fill="#4285f4"/></svg>
<div style="position:absolute;left:1279px;top:1077px;width:45px;height:3px;background:#76b9ed"></div>
<div style="position:absolute;left:1332px;top:1020px;width:57px;height:60px;background:#3d4862"></div>
<div style="position:absolute;left:1332px;top:1077px;width:57px;height:3px;background:#76b9ed"></div>
<svg style="left:1341px;top:1033px" width="37" height="33"><rect x="8" y="0.5" width="28" height="32" rx="1.5" fill="#21a366"/><rect x="8" y="11" width="28" height="11" fill="#107c41"/><rect x="22" y="0.5" width="14" height="10.5" fill="#33c481"/><rect x="8" y="22" width="28" height="10.5" fill="#185c37"/><rect x="0.5" y="7" width="19" height="19" rx="1.5" fill="#107c41"/><path d="M5.5 11 L14 22 M14 11 L5.5 22" stroke="#fff" stroke-width="2.3"/></svg>
<svg style="left:1440px;top:1034px" width="36" height="30"><path d="M10.5 0.5 Q17.5 3 16.5 11 Q15 16.5 8 17.5 Q4 17.5 1 15 Q8 14.5 10.5 9 Q12.5 4.5 10.5 0.5 Z" fill="#f5c518"/>
<path d="M8 28 Q3.5 28 3.7 23.5 Q4.2 19.5 8.5 19.8 Q9.5 13 17 12.5 Q23.5 12.8 25.5 18 Q33.5 18 34 23 Q34 28 28.5 28 Z" fill="#d6ecfb" stroke="#a9d6f5" stroke-width="1"/></svg>
<div class="t" style="left:1488.20px;top:1040.99px;font-size:21px;color:#fff;transform:scaleX(0.9029);">9°C</div>
<svg style="left:1546px;top:1044px" width="20" height="11"><path d="M1 10 L9.75 1 L18.5 10" stroke="#fff" stroke-width="1.5" fill="none"/></svg>
<svg style="left:1579px;top:1042px" width="27" height="21"><path d="M3 15 Q0 15 0.5 11 Q1.5 7.5 5 8 Q7 2 13 2.5 Q18 3 19.5 8 Q22 8 22.5 10 L18 15 Z" fill="#c8c8c8"/><path d="M3 15 Q0 15 0.5 11 L12 15 Z" fill="#eee"/><circle cx="18.5" cy="14" r="6.5" fill="#e81123" stroke="#1b2846" stroke-width="0.8"/><path d="M16 11.5 L21 16.5 M21 11.5 L16 16.5" stroke="#fff" stroke-width="1.6"/></svg>
<svg style="left:1617px;top:1044px" width="24" height="14"><rect x="0.8" y="0.8" width="20" height="11.5" stroke="#fff" stroke-width="1.5" fill="none"/><rect x="3" y="3" width="13" height="7" fill="#fff"/><rect x="21.3" y="4" width="2" height="5" fill="#fff"/></svg>
<svg style="left:1655px;top:1041px" width="21" height="20"><g fill="none" stroke="#8a8f9c" stroke-width="1.3"><path d="M1 18 A17 17 0 0 1 18 1"/><path d="M5.5 18 A12.5 12.5 0 0 1 18 5.5"/><path d="M10 18 A8 8 0 0 1 18 10"/></g><circle cx="17.5" cy="17" r="2" fill="#fff"/></svg>
<svg style="left:1689px;top:1041px" width="23" height="19"><path d="M1 6 H5 L11 1 V17.5 L5 12.5 H1 Z" stroke="#fff" stroke-width="1.5" fill="none"/><path d="M14 6 L20.5 12.5 M20.5 6 L14 12.5" stroke="#fff" stroke-width="1.4"/></svg>
<div class="t" style="left:1757.50px;top:1027.16px;font-size:17.5px;color:#fff;transform:scaleX(0.9795);">21:50</div>
<div class="t" style="left:1728.60px;top:1055.16px;font-size:17.5px;color:#fff;transform:scaleX(0.9882);">2022. 02. 18.</div>
<svg style="left:1857px;top:1037px" width="40" height="37"><path d="M1 1 H25.5 V21 H12 L6.5 26.5 V21 H1 Z" fill="#fff"/><path d="M6 6 H20 M6 10 H20 M6 14 H17" stroke="#555" stroke-width="1.3"/><circle cx="24.5" cy="24" r="11.3" fill="#333" stroke="#6f6f6f" stroke-width="1.5"/></svg>
<div class="t" style="left:1876.50px;top:1051.12px;font-size:17px;color:#fff;font-weight:bold;transform:scaleX(1.1667);">6</div>
<div style="position:absolute;left:1913px;top:1020px;width:1.5px;height:60px;background:#5a6275"></div>
</body></html>
